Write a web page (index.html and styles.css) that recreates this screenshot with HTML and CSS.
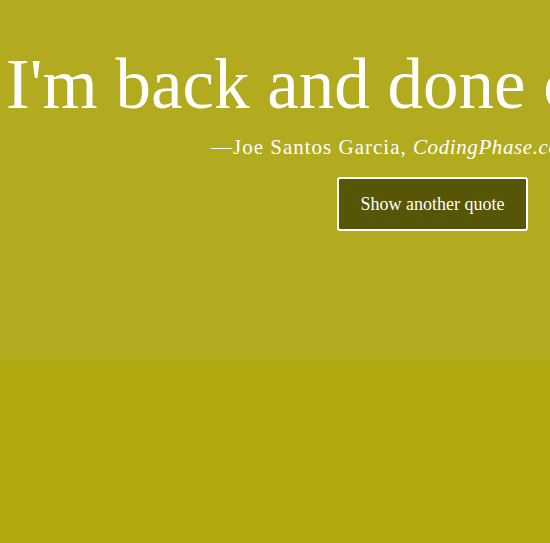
FILE: index.html
```html
<!DOCTYPE html>
<html lang="en">
<head>
<meta charset="utf-8">
<title>Quote</title>
<link rel="stylesheet" href="styles.css">
</head>
<body>
  <section class="hero">
    <div class="quote">
      <h1 class="quote-text">I'm back and done coding for today</h1>
      <p class="attribution">—Joe Santos Garcia, <em>CodingPhase.com</em></p>
      <div class="actions">
        <button class="btn" type="button">Show another quote</button>
      </div>
    </div>
  </section>
  <section class="footer-band"></section>
</body>
</html>
```

FILE: styles.css
```css
html, body {
  margin: 0;
  padding: 0;
  height: 100%;
  overflow: hidden;
}
body {
  background: #b0aa0f;
  font-family: "Liberation Serif", "DejaVu Serif", serif;
  color: #ffffff;
}
.hero {
  height: 361px;
  background: #b2ab20;
  overflow: hidden;
}
.quote {
  padding-top: 49px;
}
.quote-text {
  margin: 0;
  padding-left: 6px;
  font-size: 71px;
  font-weight: 400;
  line-height: 1;
  white-space: nowrap;
}
.attribution {
  margin: 15px 0 0;
  padding-left: 211px;
  font-size: 21px;
  letter-spacing: 1px;
  white-space: nowrap;
  line-height: 1.2;
}
.attribution em {
  font-style: italic;
  letter-spacing: 0.6px;
}
.actions {
  display: flex;
  justify-content: flex-end;
  padding-right: 22px;
  margin-top: 17px;
}
.btn {
  box-sizing: border-box;
  width: 191px;
  height: 54px;
  background: #575507;
  color: #ffffff;
  border: 2px solid #ffffff;
  border-radius: 3px;
  font-family: "Liberation Serif", "DejaVu Serif", serif;
  font-size: 18px;
  padding: 0;
}
```
